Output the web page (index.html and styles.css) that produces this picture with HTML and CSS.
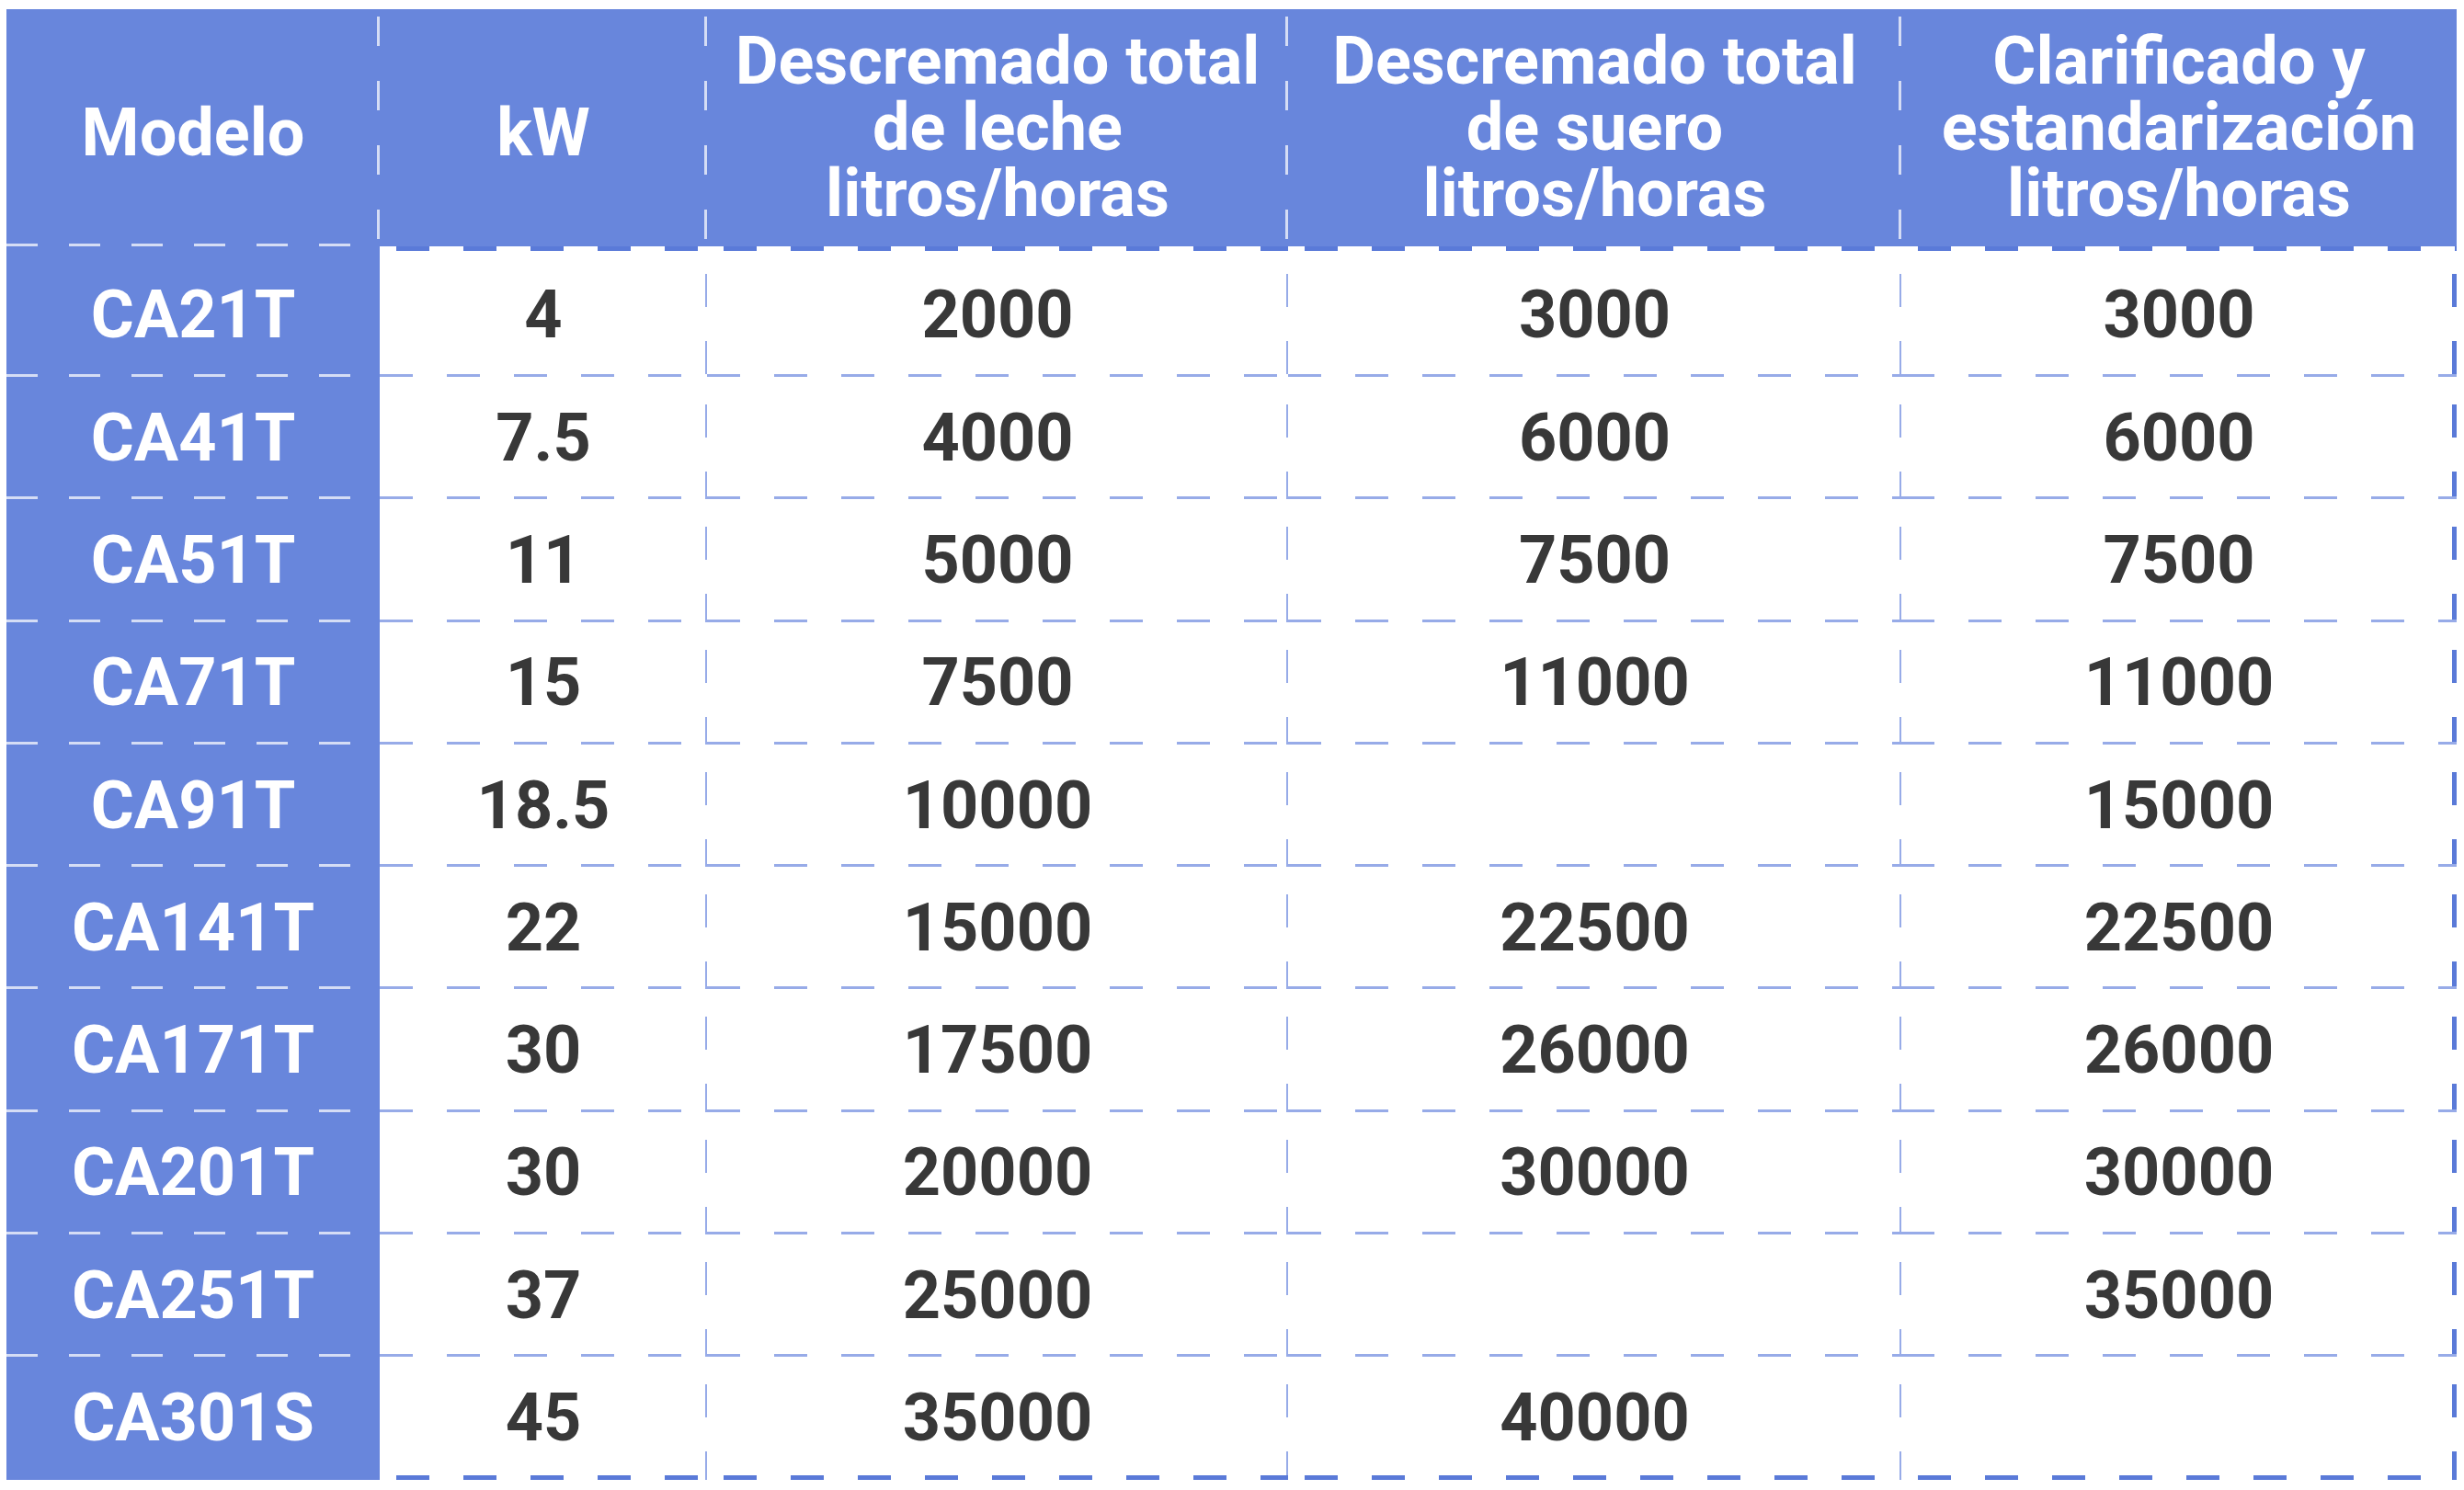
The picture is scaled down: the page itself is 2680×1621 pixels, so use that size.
FILE: index.html
```html
<!DOCTYPE html>
<html lang="es">
<head>
<meta charset="utf-8">
<title>Modelos</title>
<link rel="stylesheet" href="styles.css">
</head>
<body>
<div class="sheet" role="table">
  <div class="cell hd first one" role="columnheader">Modelo</div>
  <div class="cell hd one" role="columnheader">kW</div>
  <div class="cell hd" role="columnheader">Descremado total<br>de leche<br>litros/horas</div>
  <div class="cell hd" role="columnheader">Descremado total<br>de suero<br>litros/horas</div>
  <div class="cell hd endh" role="columnheader">Clarificado y<br>estandarización<br>litros/horas</div>

  <div class="cell md r1">CA21T</div>
  <div class="cell v r1">4</div>
  <div class="cell v r1">2000</div>
  <div class="cell v r1">3000</div>
  <div class="cell v r1 endc">3000</div>

  <div class="cell md">CA41T</div>
  <div class="cell v">7.5</div>
  <div class="cell v">4000</div>
  <div class="cell v">6000</div>
  <div class="cell v endc">6000</div>

  <div class="cell md">CA51T</div>
  <div class="cell v">11</div>
  <div class="cell v">5000</div>
  <div class="cell v">7500</div>
  <div class="cell v endc">7500</div>

  <div class="cell md">CA71T</div>
  <div class="cell v">15</div>
  <div class="cell v">7500</div>
  <div class="cell v">11000</div>
  <div class="cell v endc">11000</div>

  <div class="cell md">CA91T</div>
  <div class="cell v">18.5</div>
  <div class="cell v">10000</div>
  <div class="cell v"></div>
  <div class="cell v endc">15000</div>

  <div class="cell md">CA141T</div>
  <div class="cell v">22</div>
  <div class="cell v">15000</div>
  <div class="cell v">22500</div>
  <div class="cell v endc">22500</div>

  <div class="cell md">CA171T</div>
  <div class="cell v">30</div>
  <div class="cell v">17500</div>
  <div class="cell v">26000</div>
  <div class="cell v endc">26000</div>

  <div class="cell md">CA201T</div>
  <div class="cell v">30</div>
  <div class="cell v">20000</div>
  <div class="cell v">30000</div>
  <div class="cell v endc">30000</div>

  <div class="cell md">CA251T</div>
  <div class="cell v">37</div>
  <div class="cell v">25000</div>
  <div class="cell v"></div>
  <div class="cell v endc">35000</div>

  <div class="cell md last">CA301S</div>
  <div class="cell v last">45</div>
  <div class="cell v last">35000</div>
  <div class="cell v last">40000</div>
  <div class="cell v last endc"></div>
</div>
</body>
</html>
```
FILE: styles.css
```css
html, body {
  margin: 0;
  padding: 0;
  background: #ffffff;
}

body {
  padding: 10px 0 0 7px;
  font-family: Roboto, "Liberation Sans", Arial, sans-serif;
}

.sheet {
  --blue: #6886dc;
  --thin: #97abe8;
  --thick: #5a7ad8;
  --wline: rgba(255, 255, 255, 0.72);
  --hwhite: repeating-linear-gradient(90deg, var(--wline) 0 34px, transparent 34px 68px);
  --vwhite: repeating-linear-gradient(180deg, transparent 0 8px, var(--wline) 8px 40px, transparent 40px 70px);
  --hthin: repeating-linear-gradient(90deg, var(--thin) 0 36px, transparent 36px 73px);
  --vthin: repeating-linear-gradient(180deg, transparent 0 30px, var(--thin) 30px 66px, transparent 66px 73px);
  --hthick: repeating-linear-gradient(90deg, transparent 0 18px, var(--thick) 18px 54px, transparent 54px 73px);
  --vthick: repeating-linear-gradient(180deg, transparent 0 30px, var(--thick) 30px 66px, transparent 66px 73px);

  display: grid;
  grid-template-columns: 406px 356px 632px 667px 604px;
  grid-template-rows: 258px 142px repeat(9, 133.3px);
  width: 2665px;
}

.cell {
  --t: none;
  --tw: 0px;
  --b: none;
  --bw: 0px;
  --r: none;
  --rw: 0px;
  display: flex;
  align-items: center;
  justify-content: center;
  text-align: center;
  font-weight: 700;
  font-size: 72px;
  line-height: 72px;
  background-image: var(--t), var(--b), var(--r);
  background-size: 100% var(--tw), 100% var(--bw), var(--rw) 100%;
  background-position: 0 0, 0 100%, 100% 0;
  background-repeat: no-repeat;
  box-sizing: border-box;
}

/* header */
.hd {
  background-color: var(--blue);
  color: #ffffff;
  --r: var(--vwhite);
  --rw: 3px;
}

.hd.one {
  padding-top: 12px;
}

.hd.first {
  --b: var(--hwhite);
  --bw: 3px;
}

.hd.endh {
  --r: none;
  --rw: 0px;
}

/* model column */
.md {
  background-color: var(--blue);
  color: #ffffff;
  --b: var(--hwhite);
  --bw: 3px;
}

.md.last {
  --b: none;
  --bw: 0px;
}

/* value cells */
.v {
  background-color: #ffffff;
  color: #383838;
  --b: var(--hthin);
  --bw: 3px;
  --r: var(--vthin);
  --rw: 2px;
}

.r1 {
  padding-top: 8px;
}

.v.r1 {
  --t: var(--hthick);
  --tw: 5px;
}

.v.last {
  --b: var(--hthick);
  --bw: 5px;
}

.v.endc {
  --r: var(--vthick);
  --rw: 5px;
}
```
